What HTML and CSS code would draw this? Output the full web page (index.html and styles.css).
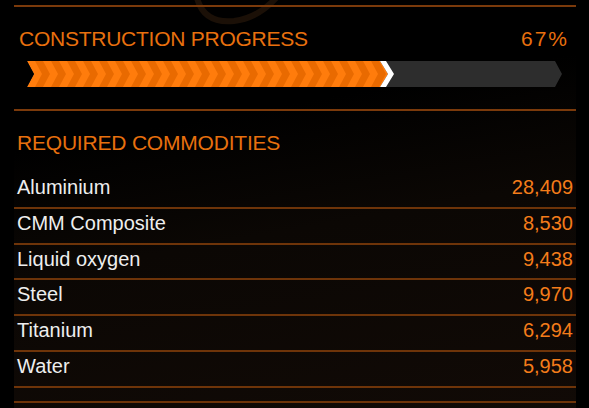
FILE: index.html
```html
<!DOCTYPE html>
<html>
<head>
<meta charset="utf-8">
<link rel="stylesheet" href="styles.css">
</head>
<body>
<div class="panel">
  <svg class="arc" width="120" height="30" viewBox="190 0 120 30"><path d="M197,-2 Q204,24 234,21 Q258,18 276,-2" fill="none" stroke="#1b1007" stroke-width="6"/></svg>
  <div class="rule"></div>
  <div class="progress-head">
    <span class="title">CONSTRUCTION PROGRESS</span>
    <span class="title pct">67%</span>
  </div>
  <div class="bar">
    <svg width="535" height="26" viewBox="0 0 535 26">
      <defs>
        <pattern id="chev" x="0" y="0" width="16" height="26" patternUnits="userSpaceOnUse">
          <rect width="16" height="26" fill="#e96a00"/>
          <polygon points="0,0 8,0 15,13 8,26 0,26 7,13" fill="#ff7c0c"/>
        </pattern>
        <clipPath id="outline">
          <polygon points="0,0 528,0 535,13 528,26 0,26 7,13"/>
        </clipPath>
      </defs>
      <g clip-path="url(#outline)">
        <rect width="535" height="26" fill="#2d2d2d"/>
        <polygon points="0,0 353,0 361,13 353,26 0,26 7,13" fill="url(#chev)"/>
        <polygon points="353,0 359,0 367,13 359,26 353,26 361,13" fill="#ffffff"/>
      </g>
    </svg>
  </div>
  <div class="rule rule-mid"></div>
  <h2 class="title section-title">REQUIRED COMMODITIES</h2>
  <ul class="list">
    <li class="row"><span>Aluminium</span><span class="qty">28,409</span></li>
    <li class="row"><span>CMM Composite</span><span class="qty">8,530</span></li>
    <li class="row"><span>Liquid oxygen</span><span class="qty">9,438</span></li>
    <li class="row"><span>Steel</span><span class="qty">9,970</span></li>
    <li class="row"><span>Titanium</span><span class="qty">6,294</span></li>
    <li class="row"><span>Water</span><span class="qty">5,958</span></li>
  </ul>
  <div class="rule rule-end"></div>
</div>
</body>
</html>
```
FILE: styles.css
```css
html, body {
  margin: 0;
  padding: 0;
  background: #000;
  width: 589px;
  height: 408px;
  overflow: hidden;
}
.panel {
  position: relative;
  margin-left: 14px;
  width: 562px;
  padding-top: 5px;
  height: 403px;
  background: linear-gradient(170deg, #000 0%, #000 30%, #0b0704 55%, #110a06 100%);
  font-family: "Liberation Sans", Arial, sans-serif;
}
.arc {
  position: absolute;
  left: 176px;
  top: 0;
}
.rule {
  position: relative;
  height: 2px;
  background: #7b3a0b;
}
.title {
  font-family: "Liberation Sans", Arial, sans-serif;
  font-size: 21px;
  line-height: 24px;
  font-weight: normal;
  color: #e8700e;
  letter-spacing: -0.25px;
}
.pct {
  letter-spacing: 2px;
  margin-right: -2px;
}
.progress-head {
  display: flex;
  justify-content: space-between;
  margin-top: 20px;
  padding: 0 9px 0 5px;
}
.bar {
  margin: 10px 0 0 13px;
  height: 26px;
}
.bar svg {
  display: block;
}
.rule-mid {
  margin-top: 22px;
}
.section-title {
  margin: 20px 0 0 3px;
  letter-spacing: -0.2px;
}
.list {
  list-style: none;
  margin: 18px 0 0 0;
  padding: 0;
}
.row {
  display: flex;
  justify-content: space-between;
  font-size: 20px;
  line-height: 29px;
  padding: 0 3px 4.8px 3px;
  color: #eeeeee;
  border-bottom: 2px solid #6e3409;
}
.qty {
  color: #f47c1a;
}
.rule-end {
  margin-top: 13.5px;
  background: #6e3409;
}
```
